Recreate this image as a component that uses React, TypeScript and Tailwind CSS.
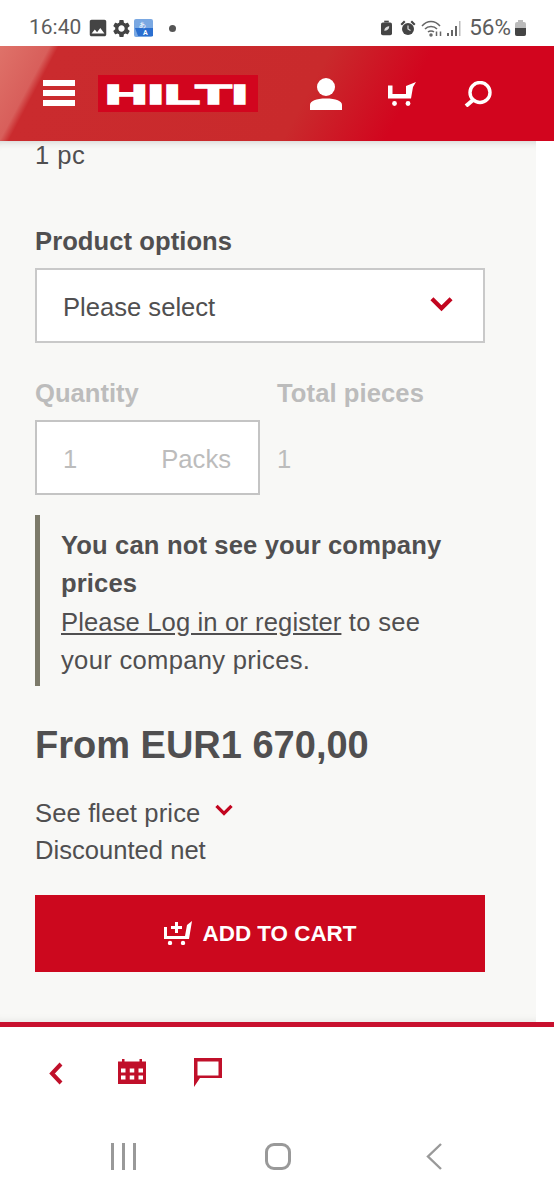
import React from 'react';
import { MdImage, MdSettings } from 'react-icons/md';

// small chevron used by the select and the fleet price row
function Chevron({ className }: { className: string }) {
  return (
    <svg viewBox="0 0 24 16" className={className} fill="none" stroke="#c2051f" strokeWidth="4.4">
      <path d="M2 2.5 L12 12.5 L22 2.5" />
    </svg>
  );
}

function StatusBar() {
  return (
    <div className="h-[46px] bg-white flex items-center pl-[29px] pr-[28px] pt-[10px] text-[#5c5c5c] font-['Roboto',sans-serif] text-[21px]">
      <span className="w-[54px]">16:40</span>
      <MdImage className="w-[22px] h-[22px] text-[#444] ml-[4px]" />
      <MdSettings className="w-[21px] h-[21px] text-[#444] ml-[2px]" />
      <svg viewBox="0 0 20 20" className="w-[20px] h-[20px] ml-[2px]">
        <rect x="0" y="1" width="19" height="18" rx="2" fill="#7aa8e2" />
        <path d="M1 10 L19 10 L19 18 L4 18 Z" fill="#2b6fd0" />
        <text x="5" y="8.5" fontSize="7" fill="#fff">あ</text>
        <text x="9" y="17" fontSize="7" fontWeight="700" fill="#fff">A</text>
      </svg>
      <span className="w-[7px] h-[7px] rounded-full bg-[#555] ml-[15px]" />
      <div className="flex-1" />
      <svg viewBox="0 0 12 16" className="w-[11px] h-[16px]">
        <rect x="3.5" y="0" width="5" height="2" fill="#444" />
        <rect x="0" y="2" width="12" height="14" rx="2" fill="#444" />
        <path d="M3.5 11 C4 7 7 6 9 6 C9 9 7 11 3.5 11 Z" fill="#ddd" />
      </svg>
      <svg viewBox="0 0 16 16" className="w-[16px] h-[16px] ml-[8px]" fill="#444">
        <circle cx="8" cy="9" r="6" />
        <path d="M0.5 4 L4 0.5 L5.5 2 L2 5.5 Z M15.5 4 L12 0.5 L10.5 2 L14 5.5 Z" />
        <path d="M8 5.5 V9 L10.5 10.5" fill="none" stroke="#ddd" strokeWidth="1.2" />
      </svg>
      <svg viewBox="0 0 22 18" className="w-[22px] h-[18px] ml-[5px]" fill="none" stroke="#666" strokeWidth="1.5">
        <path d="M1 7 C6 1 14 1 19 7" />
        <path d="M4 10 C7 6.5 13 6.5 16 10" />
        <path d="M7 13 C8.5 11.5 11.5 11.5 13 13" />
        <circle cx="10" cy="16" r="1" fill="#666" />
        <path d="M15.5 17 V12.5 M19.5 17 V12.5" />
      </svg>
      <svg viewBox="0 0 14 16" className="w-[14px] h-[16px] ml-[4px]" fill="#666">
        <rect x="0" y="13" width="2" height="3" />
        <rect x="4" y="10" width="2" height="6" />
        <rect x="8" y="6" width="2" height="10" />
        <rect x="12" y="1" width="1.5" height="15" fill="#bbb" />
      </svg>
      <span className="ml-[8px] text-[22.5px]">56%</span>
      <svg viewBox="0 0 11 16" className="w-[11px] h-[16px] ml-[4px]">
        <rect x="3" y="0" width="5" height="2" fill="#bbb" />
        <rect x="0" y="2" width="11" height="14" rx="2" fill="#bbb" />
        <path d="M0 8 H11 V14 a2 2 0 0 1 -2 2 H2 a2 2 0 0 1 -2 -2 Z" fill="#444" />
      </svg>
    </div>
  );
}

function Header() {
  return (
    <header className="h-[95px] flex items-center pl-[43px] bg-[linear-gradient(118deg,#df7269_0px,#d85f5b_44px,#ca2b2e_52px,#c92a2c_55%,#d2051e_72%,#d2051e_100%)]">
      <div className="w-[32px] flex flex-col gap-[4px] mb-[1px]">
        <div className="h-[6px] bg-white" />
        <div className="h-[6px] bg-white" />
        <div className="h-[6px] bg-white" />
      </div>
      <div className="w-[160px] h-[37px] ml-[23px] bg-[#d2051e] flex items-center justify-center">
        <svg viewBox="0 0 140 20" className="w-[140px] h-[20px] overflow-visible">
          <text
            x="-3"
            y="19.5"
            textLength="143"
            lengthAdjust="spacingAndGlyphs"
            fontFamily="Liberation Sans, sans-serif"
            fontWeight="700"
            fontSize="27"
            fill="#fff"
            stroke="#fff"
            strokeWidth="1.5"
          >
            HILTI
          </text>
        </svg>
      </div>
      <svg viewBox="0 0 32 32" className="w-[32px] h-[32px] ml-[52px]" fill="#fff">
        <circle cx="16" cy="9" r="9" />
        <path d="M0 32 V27 C0 23 6 20.5 16 20.5 C26 20.5 32 23 32 27 V32 Z" />
      </svg>
      <svg viewBox="0 0 28 24" className="w-[28px] h-[24px] ml-[46px]" fill="#fff">
        <path d="M0 3.5 H4.5 V12 H18 V4 L28 0 L25 5 L23 16.5 H0 Z" />
        <circle cx="6.5" cy="21.5" r="2.4" />
        <circle cx="20" cy="21.5" r="2.4" />
      </svg>
      <svg viewBox="0 0 28 26" className="w-[28px] h-[26px] ml-[48px]" fill="none" stroke="#fff" strokeWidth="3.4">
        <circle cx="16" cy="11.5" r="10" />
        <path d="M9 19 L2 25" strokeWidth="4" />
      </svg>
    </header>
  );
}

function Content() {
  return (
    <div className="flex h-[881px] bg-white">
      <main className="w-[536px] bg-[#f8f8f6] pl-[35px] text-[25.6px] leading-[38.4px] text-[#504f50] shadow-[inset_0_8px_8px_-8px_rgba(0,0,0,0.2),inset_0_-8px_8px_-8px_rgba(0,0,0,0.1)]">
        <div className="w-[450px]">
          <p className="leading-[28px] tracking-[0.5px]">1 pc</p>

          <h3 className="font-bold mt-[53px] tracking-[0.06px]">Product options</h3>
          <div className="h-[75px] mt-[8px] bg-white border-2 border-[#c9c9c9] flex items-center justify-between pl-[26px] pr-[30px]">
            <span className="pt-[2px]">Please select</span>
            <Chevron className="w-[23px] h-[16px] mb-[3px]" />
          </div>

          <div className="flex mt-[31px] text-[#bcbcbc]">
            <div className="w-[242px]">
              <h3 className="font-bold">Quantity</h3>
              <div className="w-[225px] h-[75px] mt-[7px] pt-[3px] bg-white border-2 border-[#c4c4c4] flex items-center justify-between pl-[26px] pr-[27px]">
                <span>1</span>
                <span>Packs</span>
              </div>
            </div>
            <div>
              <h3 className="font-bold tracking-[0.08px]">Total pieces</h3>
              <div className="h-[75px] mt-[7px] pt-[3px] flex items-center">1</div>
            </div>
          </div>

          <div className="h-[171px] mt-[20px] border-l-[5px] border-[#7c7a6a] pl-[21px] pt-[11px]">
            <div className="w-[400px]">
              <p className="font-bold tracking-[0.14px]">You can not see your company prices</p>
              <p className="tracking-[0.3px]">
                <a className="underline tracking-[0.12px]">Please Log in or register</a> to see your company prices.
              </p>
            </div>
          </div>

          <p className="font-bold text-[38px] leading-[48px] mt-[35px]">From EUR1 670,00</p>
          <div className="flex items-center mt-[25px]">
            <span className="tracking-[0.12px]">See fleet price</span>
            <Chevron className="w-[18px] h-[12px] ml-[15px] mb-[6px]" />
          </div>
          <p className="-mt-[1px]">Discounted net</p>

          <button className="w-full h-[77px] mt-[25px] pt-[3px] bg-[#cc081e] text-white font-bold text-[22.4px] flex items-center justify-center gap-[11px]">
            <svg viewBox="0 0 28 24" className="w-[28px] h-[24px] mb-[3px]" fill="#fff">
              <path d="M0 6 H3 V15 H21 L23 4 L28 0 L25 18 H0 Z" />
              <path d="M11 1 H14 V5 H18 V8 H14 V12 H11 V8 H7 V5 H11 Z" />
              <circle cx="6" cy="22" r="2.2" />
              <circle cx="19" cy="22" r="2.2" />
            </svg>
            ADD TO CART
          </button>
        </div>
      </main>
    </div>
  );
}

function BottomBar() {
  return (
    <div className="h-[173px] bg-white border-t-[5px] border-[#c8102e] flex flex-col">
      <div className="flex items-start pl-[49px] pt-[31px] h-[116px]">
        <svg viewBox="0 0 14 23" className="w-[14px] h-[23px] mt-[4px]" fill="none" stroke="#c0102a" strokeWidth="4">
          <path d="M12 2 L3 11.5 L12 21" />
        </svg>
        <svg viewBox="0 0 28 25" className="w-[28px] h-[25px] ml-[55px] mt-[1px]" fill="#c0102a">
          <path d="M4 0 H6.5 V2.5 H21.5 V0 H24 V2.5 H28 V25 H0 V2.5 H4 Z" />
          <rect x="3" y="9.5" width="4.5" height="4" fill="#fff" />
          <rect x="11.75" y="9.5" width="4.5" height="4" fill="#fff" />
          <rect x="20.5" y="9.5" width="4.5" height="4" fill="#fff" />
          <rect x="3" y="16.5" width="4.5" height="4" fill="#fff" />
          <rect x="11.75" y="16.5" width="4.5" height="4" fill="#fff" />
          <rect x="20.5" y="16.5" width="4.5" height="4" fill="#fff" />
        </svg>
        <svg viewBox="0 0 28 29" className="w-[28px] h-[29px] ml-[48px]" fill="#c0102a">
          <path fillRule="evenodd" d="M0 0 H28 V20 H6 L0 29 Z M3.5 3.5 V17.5 H24.5 V3.5 Z" />
        </svg>
      </div>
      <div className="flex items-start pl-[111px]">
        <div className="w-[25px] h-[27px] flex justify-between">
          <div className="w-[3px] bg-[#999]" />
          <div className="w-[3px] bg-[#999]" />
          <div className="w-[3px] bg-[#999]" />
        </div>
        <div className="w-[26px] h-[27px] ml-[129px] border-[3px] border-[#999] rounded-[9px]" />
        <svg viewBox="0 0 16 27" className="w-[16px] h-[27px] ml-[135px]" fill="none" stroke="#999" strokeWidth="2.4">
          <path d="M15 1 L2 13.5 L15 26" />
        </svg>
      </div>
    </div>
  );
}

export default function App() {
  return (
    <div className="w-[554px] h-[1200px] overflow-hidden bg-white font-['Liberation_Sans',Arial,sans-serif]">
      <StatusBar />
      <Header />
      <Content />
      <BottomBar />
    </div>
  );
}
